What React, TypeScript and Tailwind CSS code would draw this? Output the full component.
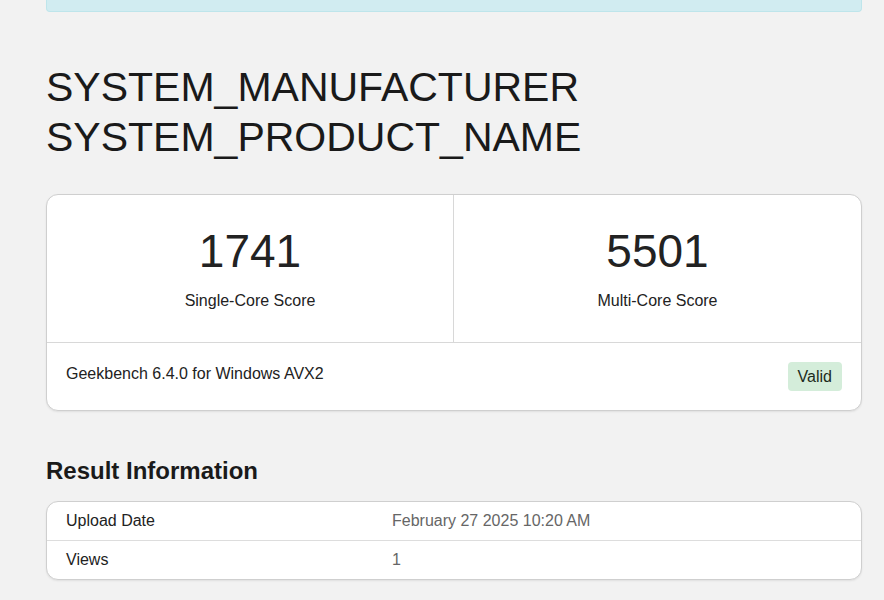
import React from "react";

const rows = [
  { label: "Upload Date", value: "February 27 2025 10:20 AM" },
  { label: "Views", value: "1" },
];

export default function App() {
  return (
    <div
      className="min-h-[600px] bg-[#f2f2f2] text-[#222] pb-10"
      style={{ fontFamily: '"Liberation Sans", Arial, sans-serif' }}
    >
      <div className="ml-[46px] w-[816px]">
        {/* alert scrolled mostly out of view */}
        <div className="h-[12px] rounded-b-[4px] border border-t-0 border-[#bee5eb] bg-[#d1ecf1]" />

        <h1 className="mt-[50px] text-[41px] leading-[50px] font-normal text-[#1a1a1a]">
          SYSTEM_MANUFACTURER
          <br />
          SYSTEM_PRODUCT_NAME
        </h1>

        <div className="mt-[32px] rounded-[12px] border border-[#cfcfcf] bg-white shadow-[0_1px_2px_rgba(0,0,0,0.08)]">
          <div className="grid grid-cols-2 border-b border-[#d8d8d8]">
            <div className="flex flex-col items-center py-[29px] border-r border-[#d8d8d8]">
              <div className="text-[46px] leading-[55px]">1741</div>
              <div className="mt-[10px] text-base leading-6">Single-Core Score</div>
            </div>
            <div className="flex flex-col items-center py-[29px]">
              <div className="text-[46px] leading-[55px]">5501</div>
              <div className="mt-[10px] text-base leading-6">Multi-Core Score</div>
            </div>
          </div>
          <div className="flex items-start justify-between px-[19px] pt-[19px] pb-[19px]">
            <div className="text-base leading-6">Geekbench 6.4.0 for Windows AVX2</div>
            <span className="rounded-[4px] bg-[#d4edda] px-[10px] py-[2px] text-base leading-[25px] text-[#1c2b20]">
              Valid
            </span>
          </div>
        </div>

        <h2 className="mt-[44px] text-[24px] leading-8 font-bold text-[#1a1a1a]">
          Result Information
        </h2>

        <div className="mt-[14px] rounded-[12px] border border-[#cfcfcf] bg-white shadow-[0_1px_2px_rgba(0,0,0,0.08)]">
          {rows.map((r, i) => (
            <div
              key={r.label}
              className={`flex px-[19px] py-[7px] text-base leading-6 ${
                i < rows.length - 1 ? "border-b border-[#dddddd]" : ""
              }`}
            >
              <div className="w-[326px] shrink-0">{r.label}</div>
              <div className="text-[#666]">{r.value}</div>
            </div>
          ))}
        </div>
      </div>
    </div>
  );
}
